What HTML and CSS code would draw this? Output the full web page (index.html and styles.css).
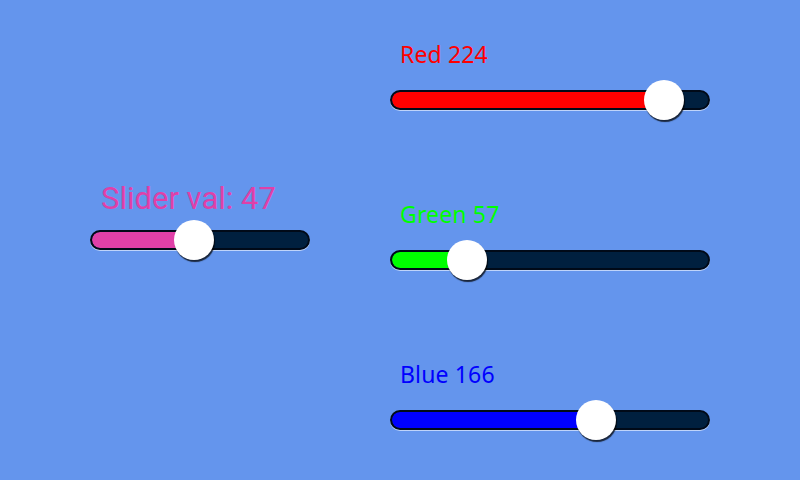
FILE: index.html
```html
<!DOCTYPE html>
<html lang="en">
<head>
    <meta charset="UTF-8">
    <meta name="viewport" content="width=device-width, initial-scale=1.0">
    <title>Sliders</title>
    <link rel="stylesheet" href="styles.css">
</head>
<body>
<div class="screen">
    <div class="left-panel">
        <div class="value-label">Slider val: 47</div>
        <div class="slider slider-small">
            <div class="track">
                <div class="fill fill-pink" style="width: 104px"></div>
            </div>
            <div class="knob" style="left: 104px"></div>
        </div>
    </div>
    <div class="right-panel">
        <div class="color-group">
            <div class="color-label label-red">Red 224</div>
            <div class="slider">
                <div class="track">
                    <div class="fill fill-red" style="width: 274px"></div>
                </div>
                <div class="knob" style="left: 274px"></div>
            </div>
        </div>
        <div class="color-group">
            <div class="color-label label-green">Green 57</div>
            <div class="slider">
                <div class="track">
                    <div class="fill fill-green" style="width: 77px"></div>
                </div>
                <div class="knob" style="left: 77px"></div>
            </div>
        </div>
        <div class="color-group">
            <div class="color-label label-blue">Blue 166</div>
            <div class="slider">
                <div class="track">
                    <div class="fill fill-blue" style="width: 206px"></div>
                </div>
                <div class="knob" style="left: 206px"></div>
            </div>
        </div>
    </div>
</div>
</body>
</html>
```

FILE: styles.css
```css
body {
    margin: 0;
    background-color: #6495ed;
    font-family: "Noto Sans", sans-serif;
}

.screen {
    display: flex;
    width: 800px;
    height: 480px;
}

.left-panel {
    width: 300px;
    padding-left: 90px;
    padding-top: 181px;
    display: flex;
    flex-direction: column;
}

.value-label {
    font-family: Roboto, sans-serif;
    font-size: 31px;
    line-height: 36px;
    color: #e040a8;
    margin-left: 11px;
    margin-bottom: 3px;
}

.right-panel {
    display: flex;
    flex-direction: column;
}

.color-group {
    height: 160px;
    padding-top: 39px;
    box-sizing: border-box;
}

.color-label {
    font-size: 23px;
    line-height: 30px;
    letter-spacing: 0.15px;
    margin-left: 10px;
    margin-bottom: 11px;
}

.label-red { color: #ff0000; }
.label-green { color: #00ff00; }
.label-blue { color: #0000ff; }

.slider {
    position: relative;
    width: 320px;
    height: 40px;
    display: flex;
    align-items: center;
}

.slider-small {
    width: 220px;
}

.track {
    width: 100%;
    height: 20px;
    box-sizing: border-box;
    border: 2px solid #000a18;
    border-radius: 10px;
    background-color: #00203f;
    box-shadow: 0 1px 0 rgba(230, 240, 255, 0.7);
    overflow: hidden;
}

.fill {
    height: 100%;
    border-radius: 8px 0 0 8px;
}

.fill-pink { background-color: #e040a8; }
.fill-red { background-color: #ff0000; }
.fill-green { background-color: #00ff00; }
.fill-blue { background-color: #0000ff; }

/* thumb sits over the track, centred on the value */
.knob {
    position: absolute;
    top: 0;
    width: 40px;
    height: 40px;
    margin-left: -20px;
    border-radius: 50%;
    background-color: #ffffff;
    box-shadow: 1px 2px 1px rgba(0, 0, 0, 0.75);
}
```
